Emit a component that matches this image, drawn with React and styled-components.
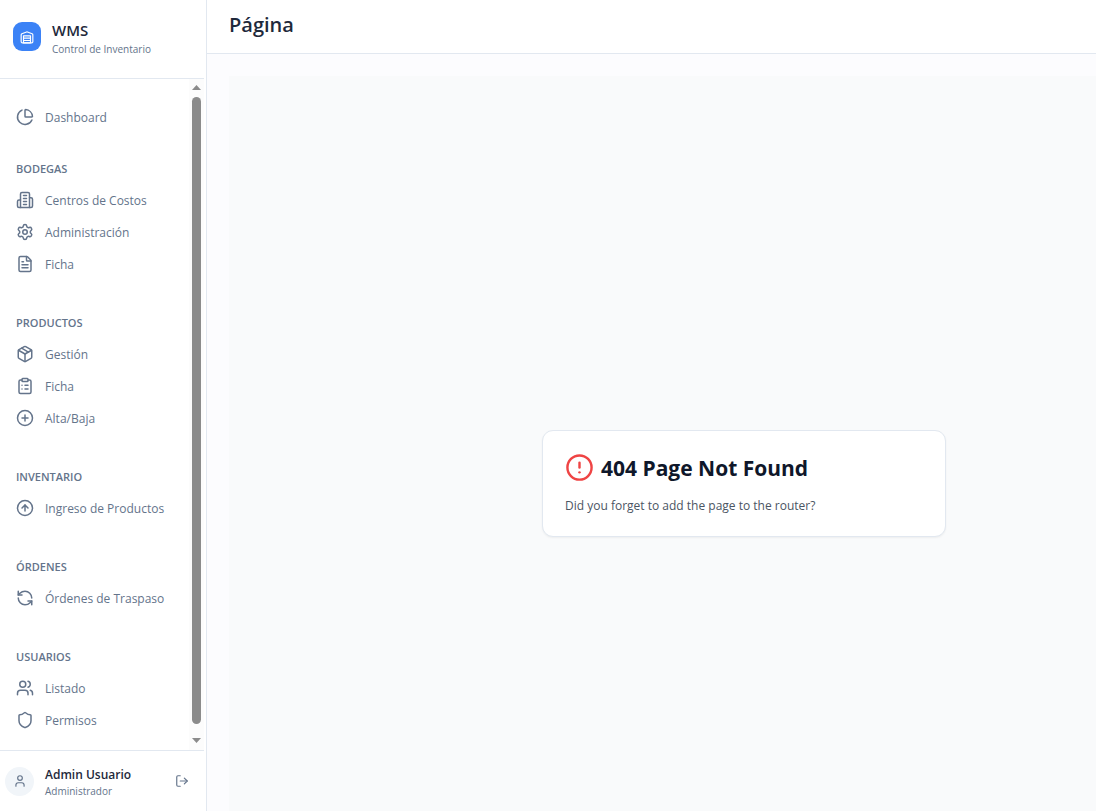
import React from "react";
import styled, { createGlobalStyle } from "styled-components";
import {
  ChartPie, Settings, FileText, Package, ClipboardList, CirclePlus,
  CircleArrowUp, RefreshCcw, Users, Shield, User, LogOut, CircleAlert,
} from "lucide-react";

const GlobalStyle = createGlobalStyle`
  *, *::before, *::after { box-sizing: border-box; }
  body {
    margin: 0;
    background: #fcfcfe;
    color: #1e293b;
    font-family: "Segoe UI", "Open Sans", "Noto Sans", sans-serif;
    font-size: 12px;
    line-height: 18px;
  }
  h1, h2, p, ul { margin: 0; padding: 0; }
  svg { display: block; flex: none; }
`;

const Shell = styled.div`
  display: flex;
  height: 100vh;
  overflow: hidden;
`;

const Sidebar = styled.aside`
  display: flex;
  flex-direction: column;
  flex: none;
  width: 207px;
  padding-right: 2px;
  background: #fff;
  border-right: 1px solid #e2e8f0;
`;

const Brand = styled.div`
  display: flex;
  align-items: center;
  gap: 11px;
  height: 79px;
  padding: 0 13px 5px;
  border-bottom: 1px solid #e2e8f0;
`;

const Logo = styled.div`
  display: grid;
  place-items: center;
  width: 28px;
  height: 29px;
  border-radius: 9px;
  background: #3b82f6;
  color: #fff;
`;

const LabelPair = styled.div`
  flex: 1;
  padding-top: 3px;
`;

const BrandName = styled.h2`
  font-size: 15px;
  font-weight: 600;
  line-height: 22px;
  color: #1e293b;
`;

const Caption = styled.p`
  font-size: 10px;
  line-height: 16px;
  color: #64748b;
`;

const NavArea = styled.div`
  display: flex;
  flex: 1;
  min-height: 0;
`;

const Nav = styled.nav`
  display: flex;
  flex-direction: column;
  gap: 35px;
  flex: 1;
  padding: 22px 6px 0 7px;
  overflow-y: auto;
  scrollbar-width: none;
`;

const TopItem = styled.div`
  margin-bottom: -7px;
`;

const SectionTitle = styled.h2`
  margin-bottom: 7px;
  padding-left: 9px;
  font-size: 11px;
  font-weight: 600;
  line-height: 16px;
  text-transform: uppercase;
  color: #64748b;
`;

const List = styled.ul`
  list-style: none;
`;

const NavLink = styled.a`
  display: flex;
  align-items: center;
  gap: 11px;
  height: 32px;
  padding: 0 9px;
  color: #64748b;
  text-decoration: none;
  white-space: nowrap;
`;

const NavLabel = styled.span`
  padding-top: 2px;
`;

const Scrollbar = styled.div`
  display: flex;
  flex-direction: column;
  align-items: center;
  gap: 7px;
  width: 15px;
  padding: 6px 0 7px;
  background: #fcfcfc;
`;

const Thumb = styled.div`
  flex: 1;
  width: 9px;
  margin-bottom: 7px;
  border-radius: 5px;
  background: #8b8b8b;
`;

const Account = styled.div`
  display: flex;
  align-items: center;
  height: 61px;
  padding: 0 8px 0 5px;
  border-top: 1px solid #e2e8f0;
`;

const Avatar = styled.div`
  display: grid;
  place-items: center;
  width: 29px;
  height: 29px;
  margin-right: 11px;
  border-radius: 50%;
  background: #f1f5f9;
  color: #64748b;
`;

const AccountName = styled.p`
  font-weight: 600;
  line-height: 16px;
  color: #1e293b;
`;

const IconButton = styled.button`
  padding: 7px;
  border: 0;
  background: none;
  color: #64748b;
  cursor: pointer;
`;

const Page = styled.div`
  display: flex;
  flex-direction: column;
  flex: 1;
  min-width: 0;
`;

const TopBar = styled.header`
  flex: none;
  height: 54px;
  padding: 9px 22px;
  background: #fff;
  border-bottom: 1px solid #e2e8f0;
`;

const PageTitle = styled.h1`
  font-size: 20px;
  font-weight: 600;
  line-height: 32px;
`;

const Content = styled.main`
  flex: 1;
  min-height: 0;
  padding: 22px;
  overflow: hidden;
`;

const NotFound = styled.section`
  display: flex;
  align-items: center;
  justify-content: center;
  min-width: 1030px;
  min-height: 100vh;
  padding-top: 4px;
  background: #f9fafb;
`;

const Card = styled.div`
  width: 404px;
  padding: 22px;
  background: #fff;
  border: 1px solid #e2e8f0;
  border-radius: 11px;
  box-shadow: 0 1px 2px rgba(0, 0, 0, 0.05);
`;

const CardHeading = styled.div`
  display: flex;
  align-items: center;
  gap: 7px;
  height: 29px;
  margin-bottom: 14px;
  color: #ef4444;
`;

const CardTitle = styled.h2`
  padding-top: 2px;
  font-size: 21px;
  font-weight: 700;
  line-height: 29px;
  color: #0f172a;
`;

const CardText = styled.p`
  line-height: 20px;
  margin-bottom: -2px;
  color: #4b5563;
`;

function StrokeIcon({ size, children }) {
  return (
    <svg width={size} height={size} viewBox="0 0 24 24" fill="none" stroke="currentColor"
      strokeWidth="2" strokeLinecap="round" strokeLinejoin="round" aria-hidden="true">
      {children}
    </svg>
  );
}

function WarehouseIcon({ size }) {
  return (
    <StrokeIcon size={size}>
      <path d="M22 8.35V20a2 2 0 0 1-2 2H4a2 2 0 0 1-2-2V8.35A2 2 0 0 1 3.26 6.5l8-3.2a2 2 0 0 1 1.48 0l8 3.2A2 2 0 0 1 22 8.35Z" />
      <path d="M6 18h12" />
      <path d="M6 14h12" />
      <rect width="12" height="12" x="6" y="10" />
    </StrokeIcon>
  );
}

function BuildingIcon({ size }) {
  return (
    <StrokeIcon size={size}>
      <path d="M6 22V4a2 2 0 0 1 2-2h8a2 2 0 0 1 2 2v18Z" />
      <path d="M6 12H4a2 2 0 0 0-2 2v6a2 2 0 0 0 2 2h2" />
      <path d="M18 9h2a2 2 0 0 1 2 2v9a2 2 0 0 1-2 2h-2" />
      <path d="M10 6h4" />
      <path d="M10 10h4" />
      <path d="M10 14h4" />
      <path d="M10 18h4" />
    </StrokeIcon>
  );
}

function Arrow({ points }) {
  return (
    <svg width="9" height="5" viewBox="0 0 9 5">
      <polygon points={points} fill="#8b8b8b" />
    </svg>
  );
}

const sections = [
  { title: "Bodegas", items: [
    ["Centros de Costos", BuildingIcon],
    ["Administración", Settings],
    ["Ficha", FileText],
  ] },
  { title: "Productos", items: [
    ["Gestión", Package],
    ["Ficha", ClipboardList],
    ["Alta/Baja", CirclePlus],
  ] },
  { title: "Inventario", items: [["Ingreso de Productos", CircleArrowUp]] },
  { title: "Órdenes", items: [["Órdenes de Traspaso", RefreshCcw]] },
  { title: "Usuarios", items: [["Listado", Users], ["Permisos", Shield]] },
];

function NavItem({ label, icon: Icon }) {
  return (
    <NavLink href="#">
      <Icon size={18} />
      <NavLabel>{label}</NavLabel>
    </NavLink>
  );
}

export default function App() {
  return (
    <>
      <GlobalStyle />
      <Shell>
        <Sidebar>
          <Brand>
            <Logo><WarehouseIcon size={14} /></Logo>
            <LabelPair>
              <BrandName>WMS</BrandName>
              <Caption>Control de Inventario</Caption>
            </LabelPair>
          </Brand>
          <NavArea>
            <Nav>
              <TopItem><NavItem label="Dashboard" icon={ChartPie} /></TopItem>
              {sections.map((s) => (
                <div key={s.title}>
                  <SectionTitle>{s.title}</SectionTitle>
                  <List>
                    {s.items.map(([label, icon]) => (
                      <li key={label}><NavItem label={label} icon={icon} /></li>
                    ))}
                  </List>
                </div>
              ))}
            </Nav>
            <Scrollbar aria-hidden="true">
              <Arrow points="0,5 4.5,0 9,5" />
              <Thumb />
              <Arrow points="0,0 4.5,5 9,0" />
            </Scrollbar>
          </NavArea>
          <Account>
            <Avatar><User size={14} /></Avatar>
            <LabelPair>
              <AccountName>Admin Usuario</AccountName>
              <Caption>Administrador</Caption>
            </LabelPair>
            <IconButton type="button" aria-label="Cerrar sesión"><LogOut size={14} /></IconButton>
          </Account>
        </Sidebar>
        <Page>
          <TopBar><PageTitle>Página</PageTitle></TopBar>
          <Content>
            <NotFound>
              <Card>
                <CardHeading>
                  <CircleAlert size={29} />
                  <CardTitle>404 Page Not Found</CardTitle>
                </CardHeading>
                <CardText>Did you forget to add the page to the router?</CardText>
              </Card>
            </NotFound>
          </Content>
        </Page>
      </Shell>
    </>
  );
}
